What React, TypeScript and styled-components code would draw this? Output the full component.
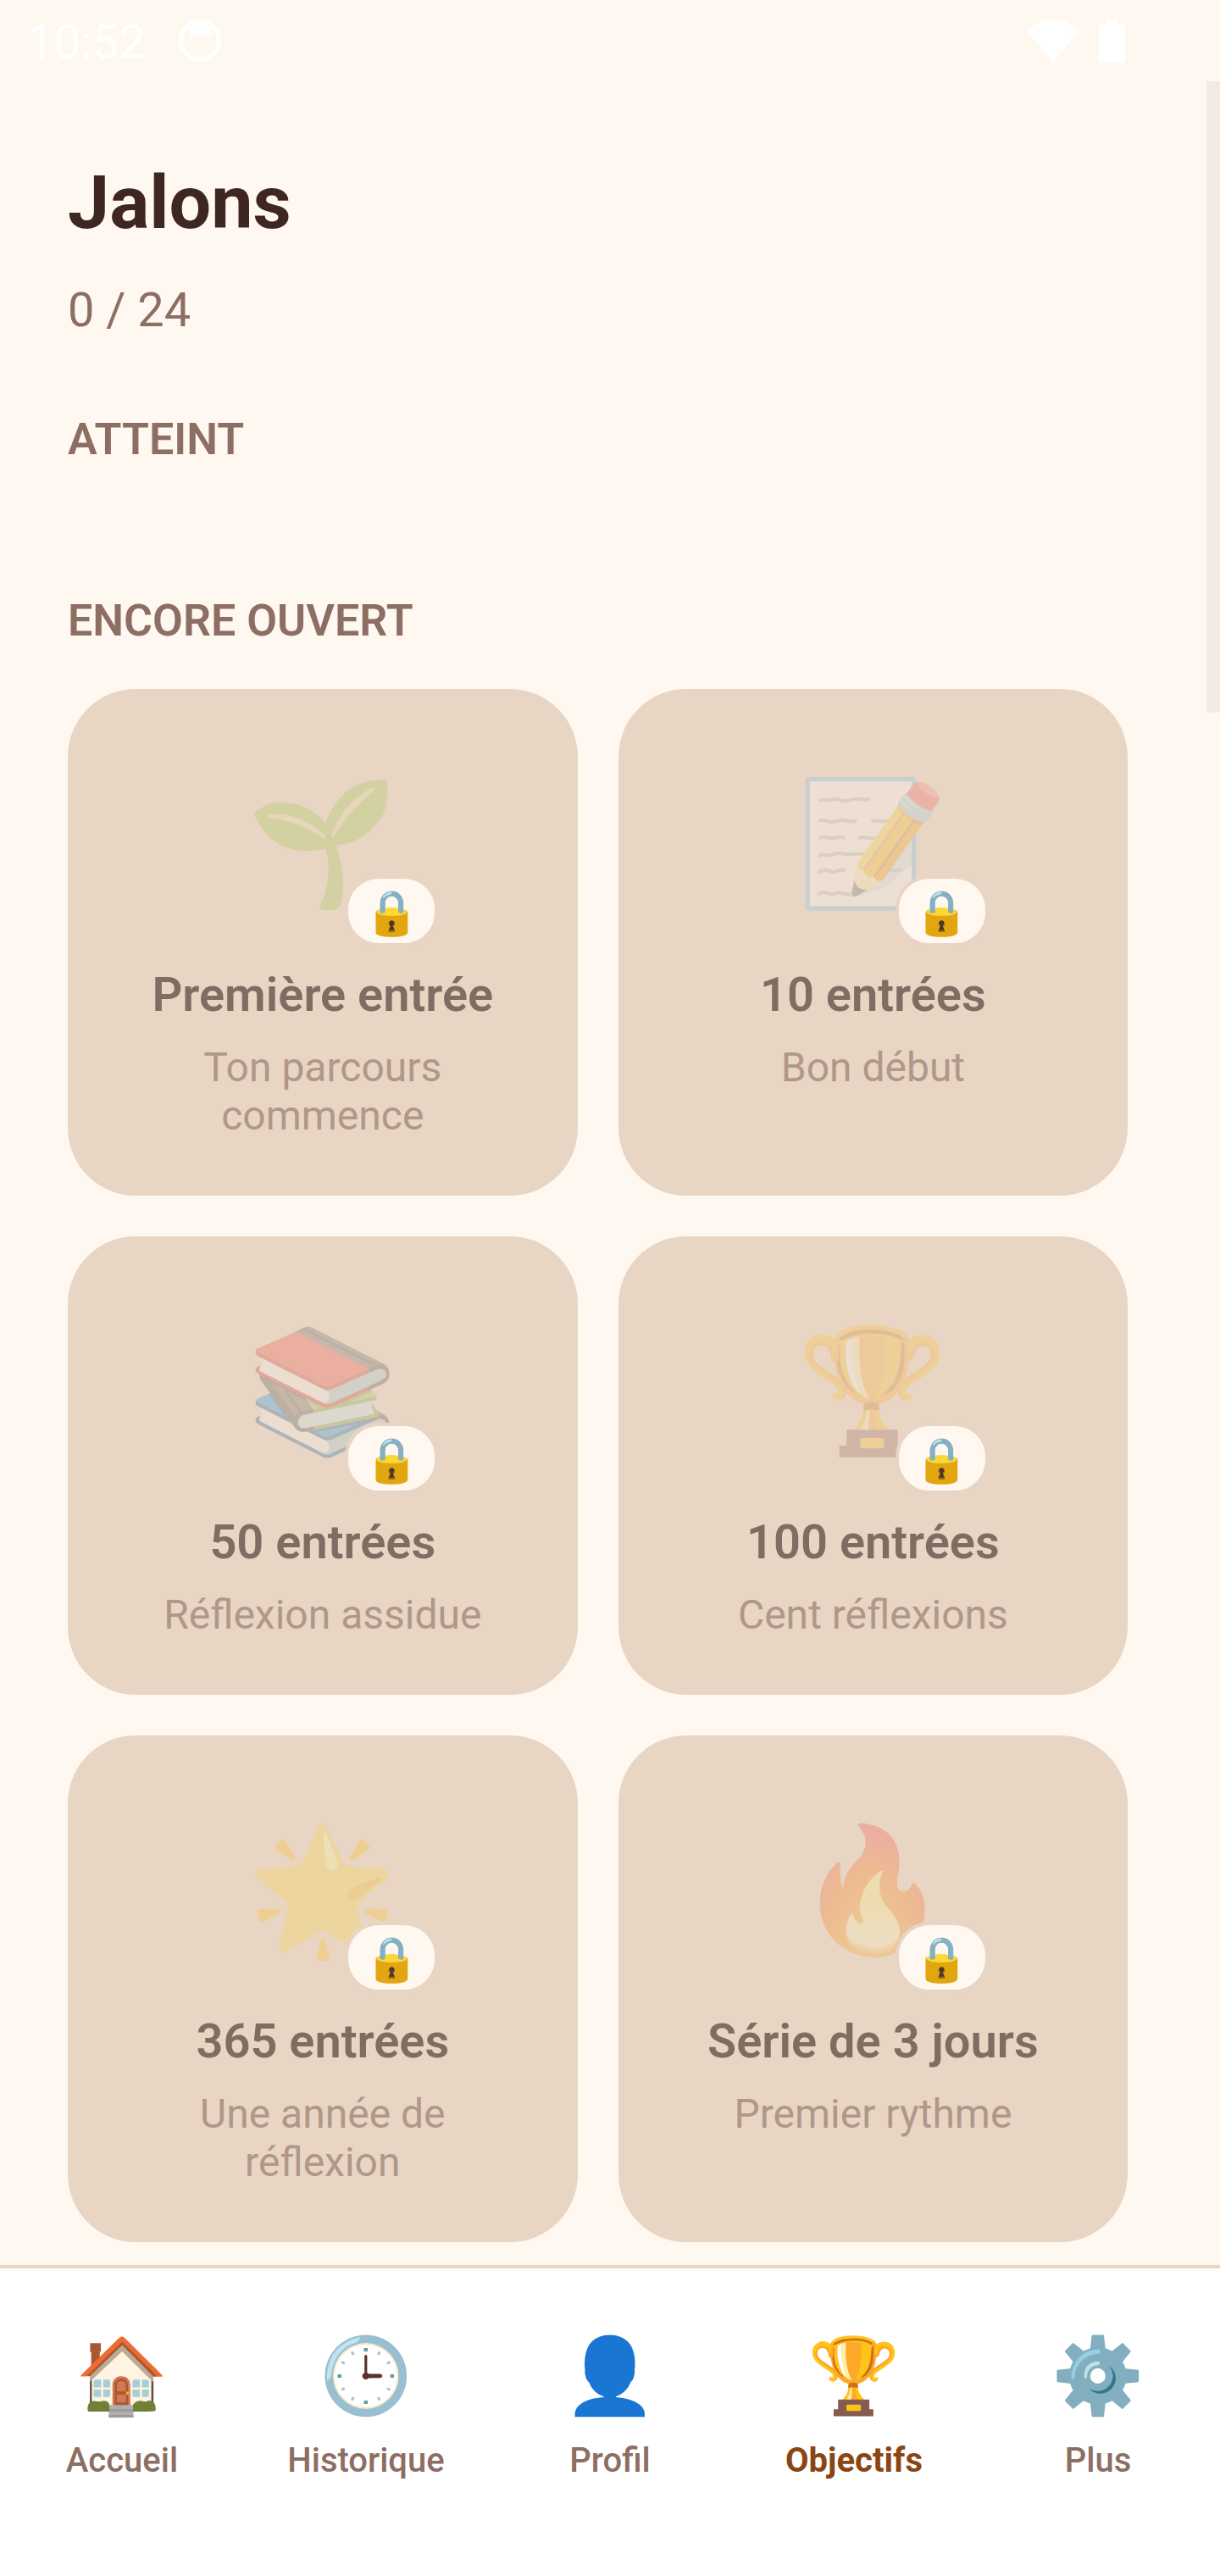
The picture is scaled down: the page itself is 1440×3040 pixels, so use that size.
import React from 'react';
import styled, { createGlobalStyle } from 'styled-components';

const color = {
  page: '#fff8f0',
  surface: '#ffffff',
  card: '#e8d5c4',
  text: '#3e2723',
  muted: '#8d6e63',
  accent: '#8b4513',
};

const GlobalStyle = createGlobalStyle`
  *, *::before, *::after { box-sizing: border-box; }
  body {
    margin: 0;
    background: ${color.page};
    color: ${color.text};
    font-family: Roboto, "Noto Sans", sans-serif;
  }
  h1, h2, h3, p, ul { margin: 0; padding: 0; }
  ul { list-style: none; }
`;

const Screen = styled.div`
  display: flex;
  flex-direction: column;
  min-height: 100vh;
`;

const StatusBar = styled.header`
  display: flex;
  align-items: center;
  justify-content: space-between;
  height: 96px;
  padding: 0 112px 0 32px;
  color: ${color.surface};
`;

const StatusGroup = styled.div<{ $gap: number }>`
  display: flex;
  align-items: center;
  gap: ${({ $gap }) => $gap}px;

  svg { display: block; }
`;

const Clock = styled.span`
  padding-top: 4px;
  font-size: 56px;
  line-height: 66px;
`;

const Content = styled.main`
  position: relative;
  flex: 1;
  padding: 80px 80px 24px;
`;

const ScrollThumb = styled.div`
  position: absolute;
  top: 0;
  right: 0;
  width: 16px;
  height: 745px;
  background: #f3eae4;
`;

const PageTitle = styled.h1`
  font-size: 88px;
  font-weight: 700;
  line-height: 125px;
`;

const Progress = styled.p`
  margin-top: 32px;
  color: ${color.muted};
  font-size: 56px;
  line-height: 66px;
`;

const Section = styled.section<{ $spaceBefore: number }>`
  margin-top: ${({ $spaceBefore }) => $spaceBefore}px;
`;

const SectionTitle = styled.h2`
  color: ${color.muted};
  font-size: 52px;
  font-weight: 600;
  line-height: 68px;
  text-transform: uppercase;
`;

const CardGrid = styled.ul`
  display: grid;
  grid-template-columns: repeat(2, 47%);
  gap: 48px;
  margin-top: 46px;
`;

const Card = styled.li`
  display: flex;
  flex-direction: column;
  align-items: center;
  padding: 64px 64px 66px;
  border-radius: 80px;
  background: ${color.card};
  text-align: center;
`;

const IconWrap = styled.div`
  position: relative;
  margin-bottom: 26px;
`;

const Emoji = styled.span<{ $size: number; $line: number; $faded?: boolean }>`
  display: block;
  font-family: "Noto Color Emoji", sans-serif;
  font-size: ${({ $size }) => $size}px;
  line-height: ${({ $line }) => $line}px;
  opacity: ${({ $faded }) => ($faded ? 0.25 : 1)};
`;

const LockBadge = styled.span`
  position: absolute;
  right: -47px;
  bottom: -2px;
  display: flex;
  justify-content: center;
  width: 110px;
  padding: 11px 0 5px;
  border: 4px solid ${color.card};
  border-radius: 40px;
  background: ${color.page};
`;

const CardTitle = styled.h3`
  margin-bottom: 24px;
  font-size: 56px;
  font-weight: 600;
  line-height: 66px;
  opacity: 0.6;
`;

const CardText = styled.p`
  color: ${color.muted};
  font-size: 48px;
  line-height: 57px;
  opacity: 0.6;
`;

const TabBar = styled.nav`
  display: flex;
  padding: 67px 0 112px;
  border-top: 4px solid ${color.card};
  background: ${color.surface};
`;

const Tab = styled.a<{ $active?: boolean }>`
  display: flex;
  flex: 1;
  flex-direction: column;
  align-items: center;
  gap: 16px;
  color: ${({ $active }) => ($active ? color.accent : color.muted)};
  font-size: 40px;
  font-weight: ${({ $active }) => ($active ? 700 : 500)};
  line-height: 48px;
  text-decoration: none;
`;

type Milestone = { icon: string; title: string; text: string };

const milestones: Milestone[] = [
  { icon: '🌱', title: 'Première entrée', text: 'Ton parcours commence' },
  { icon: '📝', title: '10 entrées', text: 'Bon début' },
  { icon: '📚', title: '50 entrées', text: 'Réflexion assidue' },
  { icon: '🏆', title: '100 entrées', text: 'Cent réflexions' },
  { icon: '🌟', title: '365 entrées', text: 'Une année de réflexion' },
  { icon: '🔥', title: 'Série de 3 jours', text: 'Premier rythme' },
];

const tabs = [
  { icon: '🏠', label: 'Accueil', href: '#accueil' },
  { icon: '🕒', label: 'Historique', href: '#historique' },
  { icon: '👤', label: 'Profil', href: '#profil' },
  { icon: '🏆', label: 'Objectifs', href: '#objectifs', active: true },
  { icon: '⚙️', label: 'Plus', href: '#plus' },
];

function FaceIcon() {
  return (
    <svg width="50" height="50" viewBox="0 0 50 50" aria-hidden="true">
      <circle cx="25" cy="25" r="22.5" fill="none" stroke="#fff" strokeWidth="5" />
      <path d="M9 10Q25-4 41 10L37 14L39 21L37 23L33 17Q25 21 17 17L14 23L12 21L14 15Z" fill="#fff" />
      <g fill="#fff" opacity="0.7">
        <circle cx="9" cy="25" r="1" />
        <circle cx="14" cy="31" r="1" />
        <circle cx="20" cy="28" r="1" />
        <circle cx="27" cy="30" r="1" />
        <circle cx="35" cy="28" r="1" />
        <circle cx="31" cy="35" r="1" />
        <circle cx="23" cy="38" r="1" />
        <circle cx="38" cy="34" r="1" />
      </g>
    </svg>
  );
}

function WifiIcon() {
  return (
    <svg width="60" height="50" viewBox="0 0 60 50" aria-hidden="true">
      <path d="M0 14Q12 0 30 0T60 14L30 50Z" fill="#fff" />
    </svg>
  );
}

function BatteryIcon() {
  return (
    <svg width="31" height="51" viewBox="0 0 31 51" aria-hidden="true">
      <path d="M9 0H22V5H28Q31 5 31 8V48Q31 51 28 51H3Q0 51 0 48V8Q0 5 3 5H9Z" fill="#fff" />
    </svg>
  );
}

function MilestoneCard({ icon, title, text }: Milestone) {
  return (
    <Card>
      <IconWrap>
        <Emoji $size={144} $line={238} $faded>{icon}</Emoji>
        <LockBadge>
          <Emoji $size={52} $line={60}>🔒</Emoji>
        </LockBadge>
      </IconWrap>
      <CardTitle>{title}</CardTitle>
      <CardText>{text}</CardText>
    </Card>
  );
}

export default function App() {
  return (
    <Screen>
      <GlobalStyle />
      <StatusBar>
        <StatusGroup $gap={40}>
          <Clock>10:52</Clock>
          <FaceIcon />
        </StatusGroup>
        <StatusGroup $gap={24}>
          <WifiIcon />
          <BatteryIcon />
        </StatusGroup>
      </StatusBar>
      <Content>
        <PageTitle>Jalons</PageTitle>
        <Progress>0 / 24</Progress>
        <Section $spaceBefore={86}>
          <SectionTitle>Atteint</SectionTitle>
        </Section>
        <Section $spaceBefore={146}>
          <SectionTitle>Encore ouvert</SectionTitle>
          <CardGrid>
            {milestones.map((m) => (
              <MilestoneCard key={m.title} {...m} />
            ))}
          </CardGrid>
        </Section>
        <ScrollThumb />
      </Content>
      <TabBar>
        {tabs.map(({ icon, label, href, active }) => (
          <Tab key={label} href={href} $active={active} aria-current={active ? 'page' : undefined}>
            <Emoji $size={88} $line={120}>{icon}</Emoji>
            <span>{label}</span>
          </Tab>
        ))}
      </TabBar>
    </Screen>
  );
}
